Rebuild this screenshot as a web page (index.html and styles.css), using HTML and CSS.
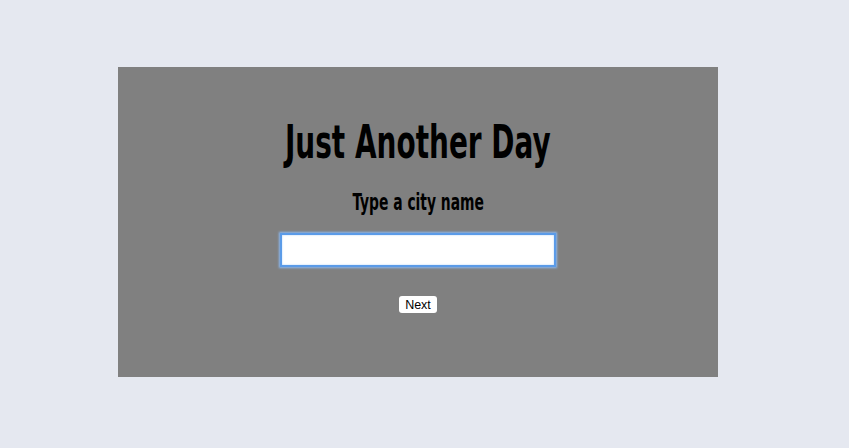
FILE: index.html
```html
<!DOCTYPE html>
<html>
<head>
<meta charset="utf-8">
<link rel="stylesheet" href="styles.css">
</head>
<body>
<main class="card">
  <h1 class="title">Just Another Day</h1>
  <h2 class="subtitle">Type a city name</h2>
  <input class="city" type="text">
  <button class="next">Next</button>
</main>
</body>
</html>
```
FILE: styles.css
```css
html, body { margin: 0; padding: 0; }
body {
  background: #e5e8f0;
  width: 849px;
  height: 448px;
  padding-top: 67px;
  box-sizing: border-box;
  font-family: "DejaVu Sans Condensed", "DejaVu Sans", sans-serif;
}
.card {
  width: 600px;
  height: 310px;
  margin-left: 118px;
  background: #808080;
  display: flex;
  flex-direction: column;
  align-items: center;
  box-sizing: border-box;
  padding-top: 50px;
}
.title {
  margin: 0;
  font-size: 46px;
  font-weight: bold;
  line-height: 50px;
  color: #000;
  white-space: nowrap;
  transform: scaleX(0.675);
}
.subtitle {
  margin: 20px 0 0;
  font-size: 23px;
  font-weight: bold;
  line-height: 30px;
  color: #000;
  white-space: nowrap;
  transform: scaleX(0.67);
}
.city {
  margin-top: 16px;
  width: 276px;
  height: 34px;
  box-sizing: border-box;
  border: 2px solid #5b9be8;
  box-shadow: 0 0 2px 1px #8ab8f0, inset 0 0 2px #a8cdf5;
  background: #fff;
  outline: none;
}
.next {
  margin-top: 29px;
  width: 38px;
  height: 17px;
  padding: 0;
  border: none;
  border-radius: 3px;
  background: #fff;
  font-family: "Liberation Sans", Arial, sans-serif;
  font-size: 12.5px;
  line-height: 18px;
  color: #000;
}
```
